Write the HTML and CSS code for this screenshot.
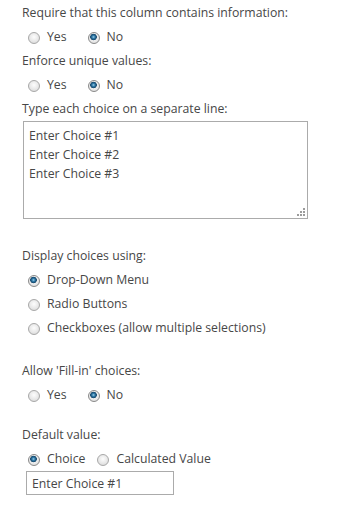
FILE: index.html
```html
<!DOCTYPE html>
<html lang="en">
<head>
    <meta charset="UTF-8">
    <meta name="viewport" content="width=device-width, initial-scale=1.0">
    <title>Choice column settings</title>
    <link rel="stylesheet" href="styles.css">
</head>
<body>

<div class="settings">
    <div class="field-label">Require that this column contains information:</div>
    <div class="options inline">
        <label class="option"><input type="radio" name="required"> Yes</label>
        <label class="option"><input type="radio" name="required" checked> No</label>
    </div>

    <div class="field-label">Enforce unique values:</div>
    <div class="options inline">
        <label class="option"><input type="radio" name="unique"> Yes</label>
        <label class="option"><input type="radio" name="unique" checked> No</label>
    </div>

    <div class="field-label">Type each choice on a separate line:</div>
    <div class="choices-box">
        <textarea class="choices">Enter Choice #1
Enter Choice #2
Enter Choice #3</textarea>
    </div>

    <!-- Display format -->
    <div class="field-label section-display">Display choices using:</div>
    <div class="options stacked">
        <label class="option"><input type="radio" name="display" checked> Drop-Down Menu</label>
        <label class="option"><input type="radio" name="display"> Radio Buttons</label>
        <label class="option"><input type="radio" name="display"> Checkboxes (allow multiple selections)</label>
    </div>

    <div class="field-label section-fillin">Allow 'Fill-in' choices:</div>
    <div class="options inline">
        <label class="option"><input type="radio" name="fillin"> Yes</label>
        <label class="option"><input type="radio" name="fillin" checked> No</label>
    </div>

    <div class="field-label section-default">Default value:</div>
    <div class="options inline tight">
        <label class="option"><input type="radio" name="default" checked> Choice</label>
        <label class="option"><input type="radio" name="default"> Calculated Value</label>
    </div>
    <input type="text" class="default-input" value="Enter Choice #1">
</div>

</body>
</html>
```

FILE: styles.css
```css
* {
    margin: 0;
    padding: 0;
    box-sizing: border-box;
}
body {
    background: #fff;
    color: #474747;
    font-family: "Open Sans", "Noto Sans", sans-serif;
    font-size: 12.25px;
}
.settings {
    padding: 1px 0 0 22px;
}
.field-label {
    line-height: 24px;
    height: 24px;
    white-space: nowrap;
}
.section-display { margin-top: 25px; }
.section-fillin { margin-top: 19px; }
.section-default { margin-top: 16px; }

.options {
    padding-left: 6px;
}
.options.inline {
    display: flex;
    gap: 21px;
}
.options.inline.tight {
    gap: 12px;
}
.options.stacked {
    display: flex;
    flex-direction: column;
}
.option {
    display: flex;
    align-items: center;
    gap: 7px;
    height: 24px;
    line-height: 24px;
    white-space: nowrap;
}
.option input {
    appearance: none;
    -webkit-appearance: none;
    width: 12px;
    height: 12px;
    border-radius: 50%;
    border: 1px solid #a8a8a8;
    background: radial-gradient(circle at 50% 40%, #fdfdfd 0%, #e8e8e8 55%, #d3d3d3 100%);
    margin-top: 2px;
    flex: none;
}
.option input:checked {
    background:
        radial-gradient(circle at 45% 40%, #9fd0ea 0, #2f7aa8 1.5px, #16476b 3px, transparent 3.6px),
        radial-gradient(circle at 50% 40%, #fdfdfd 0%, #e9e9e9 60%, #d2d2d2 100%);
    border-color: #8a8a8a;
}

.choices-box {
    position: relative;
    width: 285px;
    margin-left: 1px;
}
.choices-box::after {
    content: "";
    position: absolute;
    right: 3px;
    bottom: 3px;
    width: 8px;
    height: 8px;
    background:
        radial-gradient(circle, #9a9a9a 0.7px, transparent 1px) 6px 0 / 2px 2px no-repeat,
        radial-gradient(circle, #9a9a9a 0.7px, transparent 1px) 3px 3px / 2px 2px no-repeat,
        radial-gradient(circle, #9a9a9a 0.7px, transparent 1px) 6px 3px / 2px 2px no-repeat,
        radial-gradient(circle, #9a9a9a 0.7px, transparent 1px) 0 6px / 2px 2px no-repeat,
        radial-gradient(circle, #9a9a9a 0.7px, transparent 1px) 3px 6px / 2px 2px no-repeat,
        radial-gradient(circle, #9a9a9a 0.7px, transparent 1px) 6px 6px / 2px 2px no-repeat;
    pointer-events: none;
}
.choices {
    display: block;
    width: 100%;
    height: 98px;
    border: 1px solid #ababab;
    padding: 4px 5px;
    font-family: inherit;
    font-size: 12.25px;
    line-height: 19px;
    color: #474747;
    resize: none;
    overflow: hidden;
}
.default-input {
    display: block;
    width: 148px;
    height: 24px;
    margin-left: 4px;
    border: 1px solid #ababab;
    padding: 0 5px;
    font-family: inherit;
    font-size: 12.25px;
    color: #474747;
}
```
